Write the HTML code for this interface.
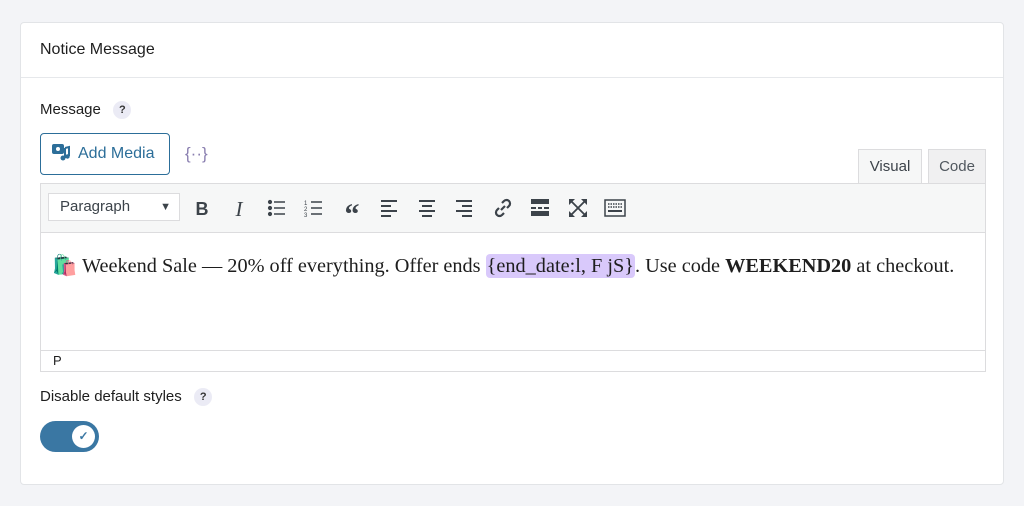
<!DOCTYPE html>
<html><head><style>
body{margin:0;width:1024px;height:506px;background:#f3f4f7;font-family:"Liberation Sans",sans-serif;color:#1e1e1e;position:relative;overflow:hidden}
.card{position:absolute;left:20px;top:22px;width:984px;height:463px;background:#fff;border:1px solid #e2e4e7;border-radius:4px;box-sizing:border-box}
.hd{position:absolute;left:0;top:0;right:0;height:54px;border-bottom:1px solid #e6e8eb;font-size:16px;line-height:54px;padding-left:19px;color:#1e1e1e}
.abs{position:absolute}
.q{display:inline-block;width:18px;height:18px;border-radius:50%;background:#ebebf5;font-size:11px;font-weight:bold;text-align:center;line-height:18px;color:#333;vertical-align:middle}
.btn{left:19px;top:110px;width:130px;height:42px;border:1px solid #2c6e99;border-radius:4px;box-sizing:border-box;color:#2c6e99;font-size:16px;line-height:40px}
.tab{top:126px;height:35px;font-size:15px;line-height:34px;text-align:center;border:1px solid #dcdcde;box-sizing:border-box;color:#50575e}
.tb{left:19px;top:160px;width:946px;height:50px;background:#f6f7f7;border:1px solid #dcdcde;box-sizing:border-box}
.sel{left:7px;top:9px;width:132px;height:28px;background:#fff;border:1px solid #dcdcde;box-sizing:border-box;font-size:15px;line-height:26px;padding-left:11px;color:#3c434a}
.ic{top:14px;font-size:18px;color:#3c434a;width:24px;text-align:center;line-height:22px}
svg.s{position:absolute;top:13px;width:22px;height:22px}
.ed{left:19px;top:209px;width:946px;height:140px;border:1px solid #dcdcde;border-top:none;box-sizing:border-box}
</style></head><body>
<div class="card">
<div class="hd">Notice Message</div>
<div class="abs" style="left:19px;top:78px;font-size:15px">Message&nbsp;&nbsp;&nbsp;<span class="q">?</span></div>
<div class="abs btn"><svg width="20" height="20" viewBox="0 0 20 20" style="margin:0 7px 0 10px;vertical-align:-4px"><rect x="1" y="2" width="12" height="10" rx="2" fill="#2c6e99"/><circle cx="7" cy="7" r="2" fill="#fff"/><path d="M14 6v10M14 6l4 -1v9" stroke="#2c6e99" stroke-width="2" fill="none"/><circle cx="12" cy="16" r="2.5" fill="#2c6e99"/><circle cx="16.5" cy="14.5" r="2.2" fill="#2c6e99"/></svg>Add Media</div>
<div class="abs" style="left:164px;top:121px;font-size:17px;color:#8a7fb0">{··}</div>
<div class="abs tab" style="left:837px;width:64px;background:#f6f7f7;border-bottom:none;height:36px;color:#3c434a">Visual</div>
<div class="abs tab" style="left:907px;width:58px;background:#f0f0f1">Code</div>
<div class="abs tb">
<div class="abs sel">Paragraph<span style="position:absolute;right:8px;top:0;font-size:11px">▼</span></div>
<div class="abs ic" style="left:149px;font-weight:bold">B</div>
<div class="abs ic" style="left:186px;font-style:italic;font-family:'Liberation Serif',serif;font-size:21px">I</div>
<svg class="s" style="left:225px" viewBox="0 0 22 22" stroke="#3c434a" stroke-width="1.6"><circle cx="4" cy="5" r="1.3" fill="#3c434a"/><circle cx="4" cy="11" r="1.3" fill="#3c434a"/><circle cx="4" cy="17" r="1.3" fill="#3c434a"/><path d="M8 5h11M8 11h11M8 17h11"/></svg>
<svg class="s" style="left:262px" viewBox="0 0 22 22" stroke="#3c434a" stroke-width="1.4"><text x="1" y="8" font-size="6" fill="#3c434a" stroke="none">1</text><text x="1" y="14" font-size="6" fill="#3c434a" stroke="none">2</text><text x="1" y="20" font-size="6" fill="#3c434a" stroke="none">3</text><path d="M8 5h11M8 11h11M8 17h11"/></svg>
<div class="abs ic" style="left:299px;font-weight:bold;font-size:30px;font-family:'Liberation Serif',serif;line-height:34px">“</div>
<svg class="s" style="left:337px" viewBox="0 0 22 22" stroke="#3c434a" stroke-width="2"><path d="M3 4h16M3 9h10M3 14h16M3 19h10"/></svg>
<svg class="s" style="left:375px" viewBox="0 0 22 22" stroke="#3c434a" stroke-width="2"><path d="M3 4h16M6 9h10M3 14h16M6 19h10"/></svg>
<svg class="s" style="left:412px" viewBox="0 0 22 22" stroke="#3c434a" stroke-width="2"><path d="M3 4h16M9 9h10M3 14h16M9 19h10"/></svg>
<svg class="s" style="left:451px" viewBox="0 0 22 22" stroke="#3c434a" stroke-width="2.2" fill="none"><path d="M9 13l4-4M10 6l2-2a3.5 3.5 0 0 1 5 5l-2 2M12 16l-2 2a3.5 3.5 0 0 1-5-5l2-2"/></svg>
<div class="abs" style="left:490px;top:15px;width:18px;height:5px;background:#3c434a"></div><div class="abs" style="left:490px;top:23px;width:5px;height:2px;background:#3c434a"></div><div class="abs" style="left:497px;top:23px;width:4px;height:2px;background:#3c434a"></div><div class="abs" style="left:503px;top:23px;width:5px;height:2px;background:#3c434a"></div><div class="abs" style="left:490px;top:27px;width:18px;height:5px;background:#3c434a"></div>
<svg class="s" style="left:526px" viewBox="0 0 22 22" stroke="#3c434a" stroke-width="1.8" fill="#3c434a"><path d="M4 4l14 14M18 4L4 18"/><path d="M2 2h6l-6 6zM20 2v6l-6-6zM2 20v-6l6 6zM20 20h-6l6-6z" stroke="none"/></svg>
<svg class="s" style="left:563px" viewBox="0 0 22 22" fill="none" stroke="#3c434a" stroke-width="1.5"><rect x="1" y="3" width="20" height="16"/><path d="M4 7h14M4 10h14" stroke-dasharray="1.5 1"/><path d="M4 14h14" stroke-width="2"/></svg>
</div>
<div class="abs ed">
<div class="abs" style="left:11px;top:21px;font-family:'Liberation Serif',serif;font-size:20.3px;white-space:nowrap">🛍️ Weekend Sale — 20% off everything. Offer ends <span style="background:#d9c9fb;border-radius:4px;padding:1px 1px">{end_date:l, F jS}</span>. Use code <b>WEEKEND20</b> at checkout.</div>
</div>
<div class="abs" style="left:19px;top:327px;width:946px;height:22px;border:1px solid #dcdcde;box-sizing:border-box;font-size:13px;line-height:20px;padding-left:12px;color:#1e1e1e">P</div>
<div class="abs" style="left:19px;top:365px;font-size:15px">Disable default styles&nbsp;&nbsp;&nbsp;<span class="q">?</span></div>
<div class="abs" style="left:19px;top:398px;width:59px;height:31px;border-radius:16px;background:#3a77a3"><div class="abs" style="left:32px;top:4px;width:23px;height:23px;border-radius:50%;background:#fff;color:#3a77a3;font-size:12px;text-align:center;line-height:23px;font-weight:bold">✓</div></div>
</div>
</body></html>
